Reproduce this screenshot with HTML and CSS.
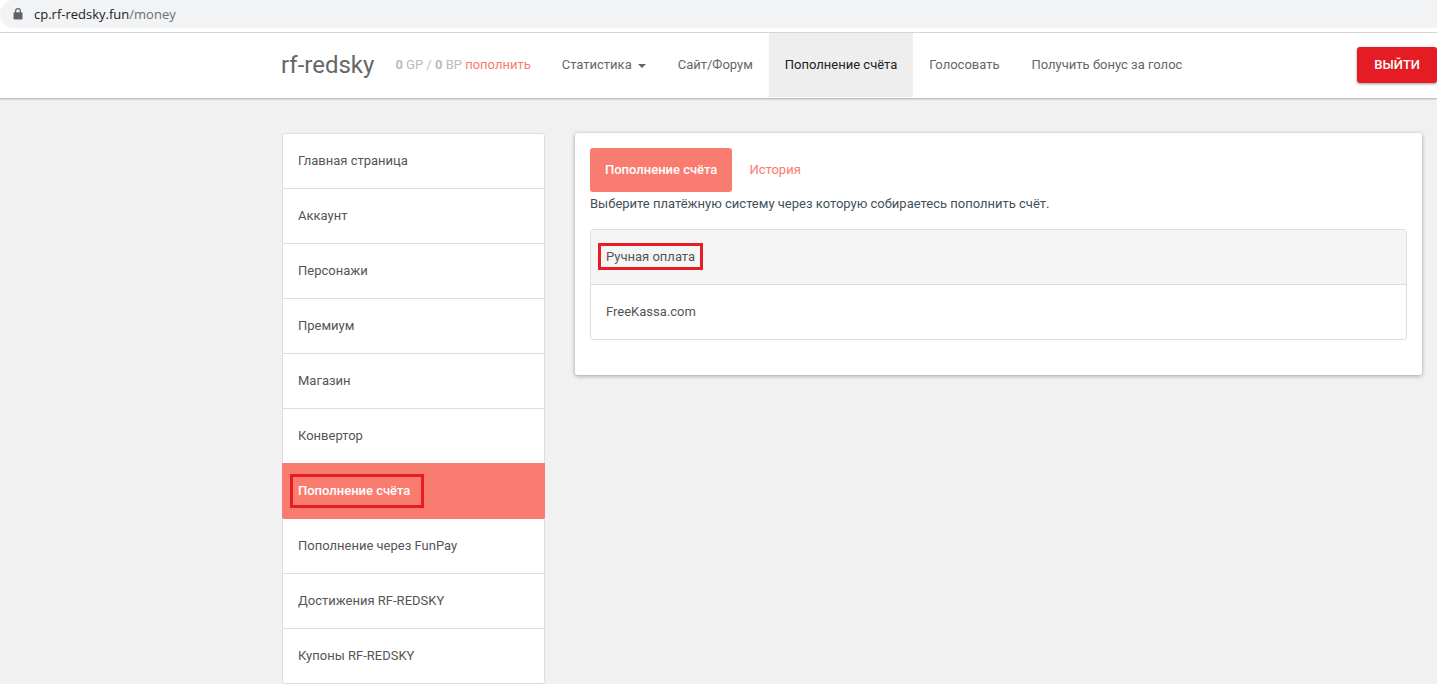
FILE: index.html
```
<!DOCTYPE html>
<html lang="ru">
<head>
<meta charset="utf-8">
<title>rf-redsky</title>
<link rel="stylesheet" href="styles.css">
</head>
<body>
<div class="browser-bar">
  <div class="address">
    <svg class="lock" width="10" height="12" viewBox="0 0 10 12" aria-hidden="true"><path fill="#5f6368" d="M1.5 4.2H2V3a3 3 0 0 1 6 0v1.2h.5A1 1 0 0 1 9.500 5.200v5.300a1 1 0 0 1-1 1h-7a1 1 0 0 1-1-1V5.200a1 1 0 0 1 1-1zM3.200 4.200h3.600V3a1.800 1.800 0 0 0-3.600 0z"/></svg>
    <span class="url">cp.rf-redsky.fun<span class="url-path">/money</span></span>
  </div>
</div>
<header class="navbar">
  <div class="container navbar-inner">
    <a class="brand" href="#">rf-redsky</a>
    <p class="balance"><b>0</b> GP / <b>0</b> BP <a href="#">пополнить</a></p>
    <nav class="nav">
      <a href="#">Статистика<span class="caret"></span></a>
      <a href="#">Сайт/Форум</a>
      <a class="active" href="#">Пополнение счёта</a>
      <a href="#">Голосовать</a>
      <a href="#">Получить бонус за голос</a>
    </nav>
    <button class="logout" type="button">ВЫЙТИ</button>
  </div>
</header>
<div class="container layout">
  <nav class="list">
    <a class="item" href="#">Главная страница</a>
    <a class="item" href="#">Аккаунт</a>
    <a class="item" href="#">Персонажи</a>
    <a class="item" href="#">Премиум</a>
    <a class="item" href="#">Магазин</a>
    <a class="item" href="#">Конвертор</a>
    <a class="item current" href="#"><span class="marked marked-tall">Пополнение счёта</span></a>
    <a class="item" href="#">Пополнение через FunPay</a>
    <a class="item" href="#">Достижения RF-REDSKY</a>
    <a class="item" href="#">Купоны RF-REDSKY</a>
  </nav>
  <main class="panel">
    <div class="tabs">
      <a class="tab selected" href="#">Пополнение счёта</a>
      <a class="tab" href="#">История</a>
    </div>
    <p class="hint">Выберите платёжную систему через которую собираетесь пополнить счёт.</p>
    <div class="list">
      <a class="item hovered" href="#"><span class="marked">Ручная оплата</span></a>
      <a class="item" href="#">FreeKassa.com</a>
    </div>
  </main>
</div>
</body>
</html>
```
FILE: styles.css
```
* { box-sizing: border-box; }
body {
  margin: 0;
  background: #f1f1f1;
  color: #444f5a;
  font: 13px/22px Roboto, sans-serif;
}
a { color: inherit; text-decoration: none; }
p { margin: 0; }

.browser-bar {
  height: 33px;
  background: #fff;
  border-bottom: 1px solid #d9dadb;
}
.address {
  display: flex;
  align-items: center;
  gap: 11px;
  height: 28px;
  padding-left: 13px;
  background: #f1f3f4;
  border-radius: 14px 0 0 14px;
}
.url { color: #202124; font: 13px/28px "Open Sans", sans-serif; }
.url-path { color: #6b6f73; }

.container {
  max-width: 1170px;
  margin-left: auto;
}
.navbar {
  padding-bottom: 1px;
  background: #fff;
  box-shadow: 0 1px 2px rgba(0, 0, 0, 0.3);
  color: #666;
}
.navbar-inner {
  display: flex;
  align-items: center;
  padding-left: 14px;
}
.brand { font-size: 24px; line-height: 32px; margin-right: 21px; }
.balance { color: #bbb; margin-right: 15px; }
.balance a { color: #f77b70; }
.nav { display: flex; }
.nav a { padding: 21px 16px; }
.nav .active { background: #eee; color: #212121; }
.caret {
  display: inline-block;
  margin-left: 6px;
  vertical-align: middle;
  border: 4px solid transparent;
  border-top-color: currentColor;
  border-bottom: 0;
}
.logout {
  margin-left: auto;
  padding: 7px 17px;
  border: 0;
  border-radius: 3px;
  background: #e51c23;
  color: #fff;
  font: 500 13px/22px Roboto, sans-serif;
  box-shadow: 0 1px 3px rgba(0, 0, 0, 0.4);
}

.layout {
  display: grid;
  grid-template-columns: 263px 1fr;
  gap: 30px;
  align-items: start;
  padding: 35px 15px 0;
}
.list {
  background: #fff;
  border: 1px solid #ddd;
  border-radius: 3px;
  color: #555;
}
.item {
  display: block;
  padding: 16px 15px;
}
.item + .item { border-top: 1px solid #ddd; }
.item.current {
  margin: 0 -1px;
  padding: 16px;
  border-color: #f97c70;
  background: #f97c70;
  color: #fff;
  font-weight: 500;
}
.current + .item { border-color: #f97c70; }
.item.hovered { background: #f5f5f5; }
.marked { position: relative; }
.marked::after {
  content: "";
  position: absolute;
  inset: -6px -8px;
  border: 3px solid #e81c24;
}
.marked-tall::after { inset: -9px -14px -10px -8px; }

.panel {
  padding: 15px 15px 35px;
  background: #fff;
  border-radius: 3px;
  box-shadow: 0 1px 4px rgba(0, 0, 0, 0.35);
}
.tabs { display: flex; gap: 2px; }
.tab {
  padding: 11px 15px;
  border-radius: 3px;
  color: #f77b70;
}
.tab.selected { background: #f97c70; color: #fff; font-weight: 500; }
.hint { padding-top: 1px; margin-bottom: 14px; }
```
